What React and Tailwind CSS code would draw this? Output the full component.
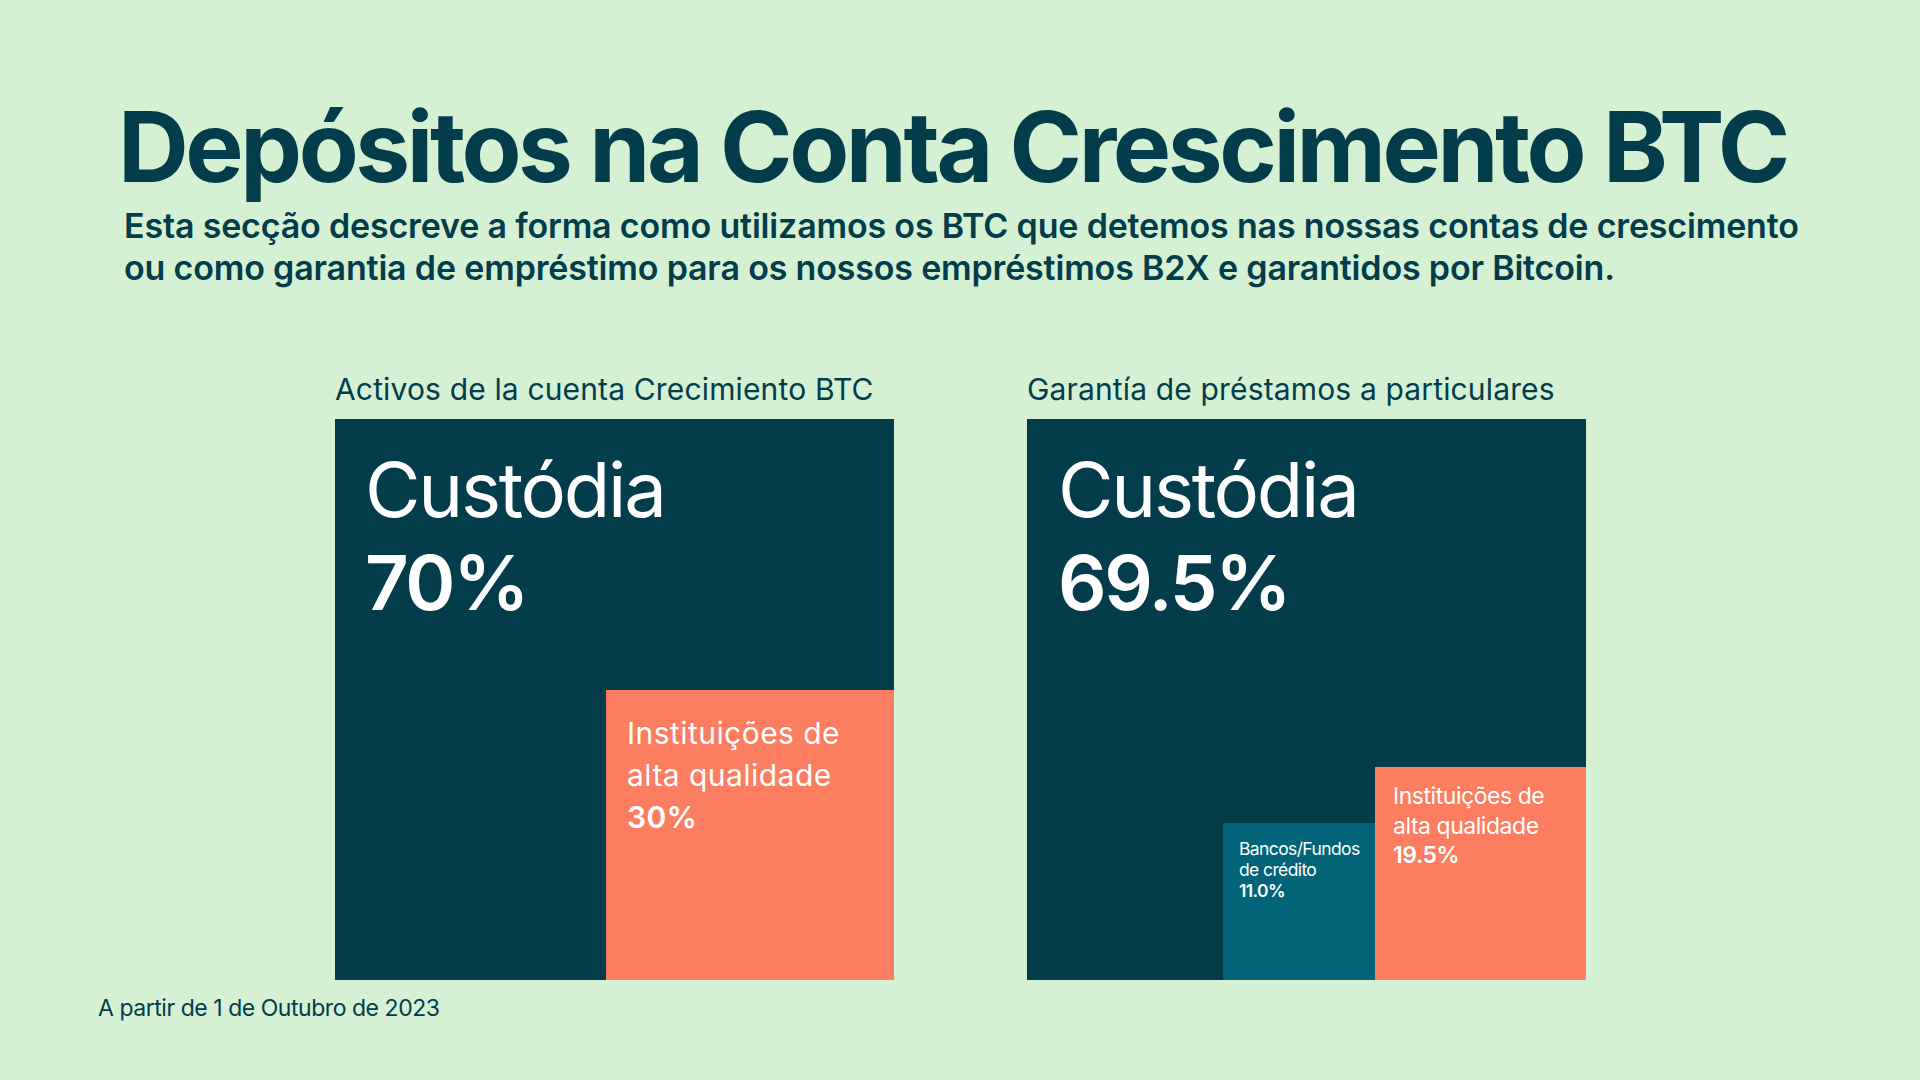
import React from 'react';

const font = { fontFamily: 'Inter, "Liberation Sans", sans-serif' };

function ChartLabel({ children }) {
  return <div className="mb-[12px] text-[30px] leading-[36px] tracking-[0.005em] text-[#033c4b]">{children}</div>;
}

export default function App() {
  return (
    <div style={font} className="flex h-[1080px] w-[1920px] flex-col bg-[#d5f1d4] text-[#033c4b]">
      {/* heading */}
      <div className="pl-[118px] pt-[92px]">
        <h1 className="text-[98px] font-bold leading-[110px] tracking-[-0.035em]">Depósitos na Conta Crescimento BTC</h1>
        <p className="mt-[3px] pl-[6px] text-[34px] font-semibold leading-[42px] tracking-[-0.005em]">
          Esta secção descreve a forma como utilizamos os BTC que detemos nas nossas contas de crescimento
          <br />
          ou como garantia de empréstimo para os nossos empréstimos B2X e garantidos por Bitcoin.
        </p>
      </div>

      {/* charts */}
      <div className="mt-[82px] flex gap-[133px] pl-[335px]">
        <div className="flex flex-col">
          <ChartLabel>Activos de la cuenta Crecimiento BTC</ChartLabel>
          <div className="flex h-[561px] w-[559px] flex-col bg-[#033c4b] text-white">
            <div className="px-[30px] pt-[24px] text-[76px] leading-[93px] tracking-[-0.03em]">
              <div>Custódia</div>
              <div className="font-semibold">70%</div>
            </div>
            <div className="mt-auto flex justify-end">
              <div className="h-[290px] w-[288px] bg-[#fc7d5f] px-[21px] pt-[22px] text-[30px] leading-[42px] tracking-[0.015em]">
                <div>Instituições de</div>
                <div>alta qualidade</div>
                <div className="font-semibold">30%</div>
              </div>
            </div>
          </div>
        </div>

        <div className="flex flex-col">
          <ChartLabel>Garantía de préstamos a particulares</ChartLabel>
          <div className="flex h-[561px] w-[559px] flex-col bg-[#033c4b] text-white">
            <div className="px-[31px] pt-[24px] text-[76px] leading-[93px] tracking-[-0.03em]">
              <div>Custódia</div>
              <div className="font-semibold">69.5%</div>
            </div>
            <div className="mt-auto flex items-end justify-end">
              <div className="h-[157px] w-[152px] bg-[#016478] px-[16px] pt-[15px] text-[17.5px] leading-[21px] tracking-[-0.035em]">
                <div>Bancos/Fundos</div>
                <div>de crédito</div>
                <div className="font-semibold">11.0%</div>
              </div>
              <div className="h-[213px] w-[211px] bg-[#fc7d5f] px-[18px] pt-[15px] text-[23px] leading-[29.5px] tracking-[-0.02em]">
                <div>Instituições de</div>
                <div>alta qualidade</div>
                <div className="font-semibold">19.5%</div>
              </div>
            </div>
          </div>
        </div>
      </div>

      <div className="mt-[14px] pl-[98px] text-[23px] leading-[28px] tracking-[-0.02em]">A partir de 1 de Outubro de 2023</div>
    </div>
  );
}
